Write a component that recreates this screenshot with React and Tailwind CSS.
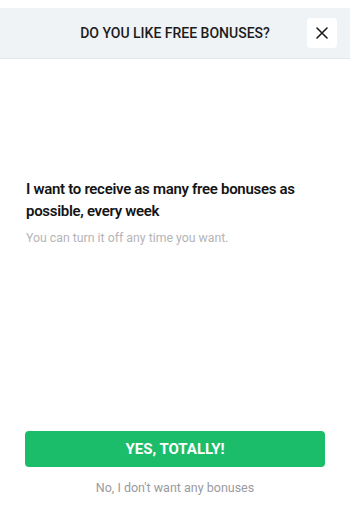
import React from 'react';

const App = () => {
    return (
        <div className="w-[350px] h-[510px] bg-white flex flex-col font-['Roboto',sans-serif] overflow-hidden">
            {/* Header */}
            <div className="mt-[8px] h-[51px] bg-[#eff3f6] border-b border-[#e3e7eb] flex items-center relative">
                <h1 className="flex-1 text-center text-[14px] font-medium text-[#1c1c1c]">
                    DO YOU LIKE FREE BONUSES?
                </h1>
                <button className="absolute right-[13px] top-[10px] w-[30px] h-[30px] bg-white rounded-[4px] flex items-center justify-center">
                    <svg width="12" height="12" viewBox="0 0 12 12" fill="none" stroke="#1c1c1c" strokeWidth="1.6" strokeLinecap="round">
                        <path d="M1 1l10 10M11 1L1 11" />
                    </svg>
                </button>
            </div>

            {/* Content */}
            <div className="flex-1 px-[26px] pt-[119px]">
                <p className="text-[15px] leading-[22px] font-semibold tracking-[-0.3px] text-[#141414]">
                    I want to receive as many free bonuses as possible, every week
                </p>
                <p className="mt-[7px] text-[12.3px] text-[#b4b4b8]">
                    You can turn it off any time you want.
                </p>
            </div>

            {/* Actions */}
            <div className="px-[25px] pb-[12px] flex flex-col items-center">
                <button className="w-full h-[36px] rounded-[4px] bg-[#1bbd6a] text-white text-[15px] font-bold">
                    YES, TOTALLY!
                </button>
                <button className="mt-[12px] text-[12.5px] text-[#9a9aa0]">
                    No, I don't want any bonuses
                </button>
            </div>
        </div>
    );
};

export default App;
